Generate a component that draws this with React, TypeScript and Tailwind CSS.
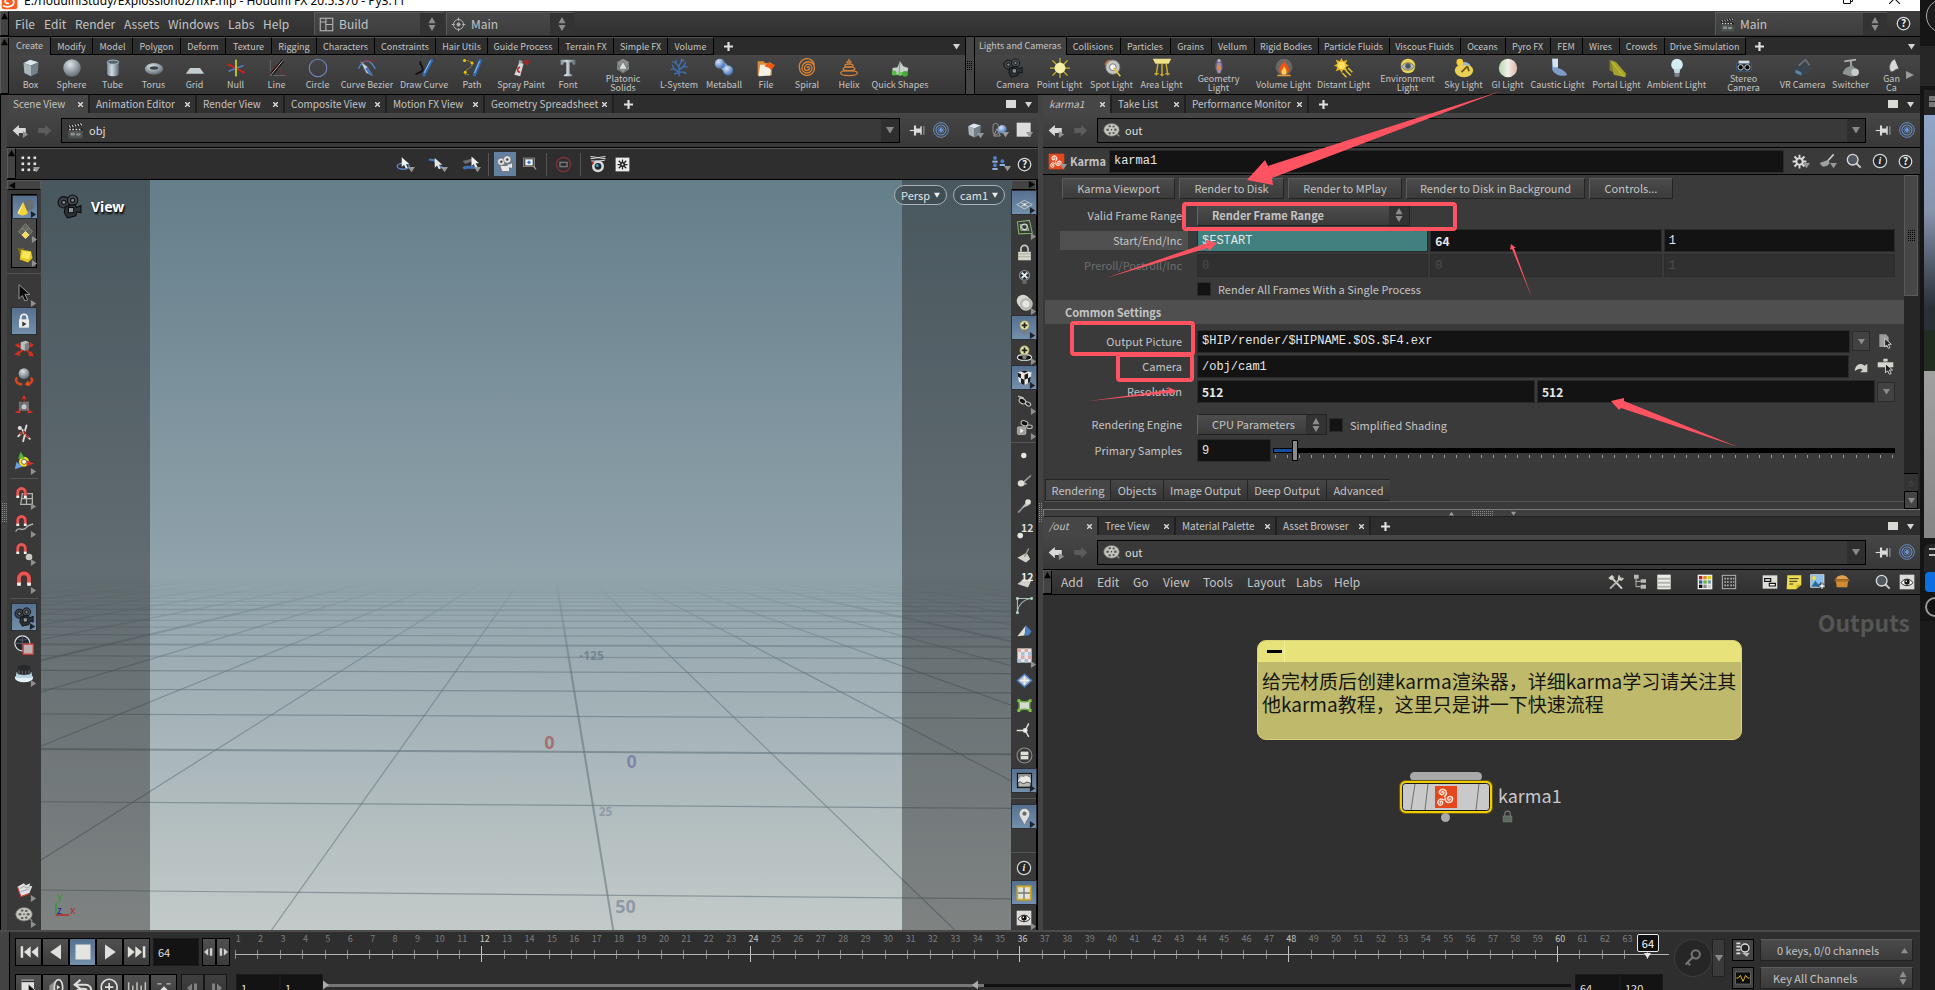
import { ReactNode } from 'react'
import clsx from 'clsx'

const SPIRAL = 'M0 0a1 1 0 0 1 2 0a2 2 0 0 1-4 0a3 3 0 0 1 6 0'

const KARMA = (
  <g>
    <rect x="1" y="1" width="22" height="22" fill="#e5481c" />
    <g fill="none" stroke="#fbe3d8" strokeWidth="1.3" strokeLinecap="round">
      <path d={SPIRAL} transform="translate(8 7) rotate(60) scale(1.25)" />
      <path d={SPIRAL} transform="translate(16 14) rotate(190) scale(1.25)" />
      <path d={SPIRAL} transform="translate(6.500 18) rotate(-50) scale(1.05)" />
    </g>
  </g>
)

const REEL = (
  <g>
    <ellipse cx="12" cy="11" rx="11" ry="9" fill="#c4c5bd" stroke="#6d6e68" />
    <g fill="#5f605a">
      <ellipse cx="6.500" cy="11" rx="2" ry="1.700" />
      <ellipse cx="17.500" cy="11" rx="2" ry="1.700" />
      <ellipse cx="9.500" cy="6" rx="2" ry="1.500" />
      <ellipse cx="15" cy="6.500" rx="1.800" ry="1.400" />
      <ellipse cx="9.500" cy="16" rx="2" ry="1.500" />
      <ellipse cx="15" cy="15.500" rx="1.800" ry="1.400" />
    </g>
    <circle cx="12" cy="11" r="1" fill="#333" />
    <path d="M20 17l3 3" stroke="#8a8b84" strokeWidth="2" />
  </g>
)

const MOVIECAM = (
  <g stroke="#0b0d0f" strokeWidth="1">
    <circle cx="6.500" cy="8" r="5.500" fill="#3c4247" />
    <circle cx="15" cy="6" r="5" fill="#464d53" />
    <circle cx="6.500" cy="8" r="2" fill="#7d868d" />
    <circle cx="15" cy="6" r="2" fill="#7d868d" />
    <path d="M8 12l9-2 2 3 4-2v7l-4-1-1 4-8 2-3-5z" fill="#2d3236" />
    <rect x="11" y="13" width="5" height="5" fill="#8e979e" />
  </g>
)

const CLAPPER = (
  <g>
    <path d="M1 5l20-4 1 4L2 9z" fill="#161616" />
    <path d="M3 5l2 3M7 4.200l2 3M11 3.400l2 3M15 2.600l2 3M19 2l2 3" stroke="#d5d5d5" strokeWidth="1.600" />
    <rect x="2" y="9" width="20" height="14" fill="#4e5451" />
    <path d="M2 10.500h20" stroke="#161616" strokeWidth="3" />
    <path d="M3 10.500h18" stroke="#d5d5d5" strokeWidth="2" strokeDasharray="2.500 2" />
    <path d="M5 15h6v4H5zM13 16h6v3h-6z" fill="#8b938f" />
  </g>
)

const MAGNET = (
  <g fill="none">
    <path d="M6 17v-7a6 6 0 0 1 12 0v7" stroke="#7e1c1c" strokeWidth="6" />
    <path d="M6 15v-5a6 6 0 0 1 12 0v5" stroke="#e05a5a" strokeWidth="4.500" />
    <path d="M6 15v4M18 15v4" stroke="#f4f4f4" strokeWidth="4.500" />
  </g>
)

const CURSOR = <path d="M0 0v13l3-3 2.500 5 2.500-1-2.500-5h4.500z" />

const BULB = (
  <g>
    <circle cx="12" cy="9" r="6.500" fill="#e9e6a8" stroke="#8d8a50" />
    <path d="M9 15h6v5l-3 2-3-2z" fill="#7c7c7c" />
  </g>
)

const art: Record<string, ReactNode> = {
  karma: KARMA,
  reel: REEL,
  moviecam: MOVIECAM,
  clapper: CLAPPER,
  appicon: (
    <g>
      <rect x="1" y="1" width="22" height="22" rx="3" fill="#ff5a1f" />
      <path d="M3 18c6 3 15 1 15-5s-8-8-11-4 1 7 4 5" fill="none" stroke="#fff" strokeWidth="2.500" />
    </g>
  ),
  box: (
    <g>
      <path d="M3 6l8-4 10 3-9 4z" fill="#dfe6ea" />
      <path d="M3 6l9 3v13l-8-4z" fill="#a9b4bb" />
      <path d="M12 9l9-4-1 13-8 4z" fill="#75818a" />
    </g>
  ),
  sphere: <circle cx="12" cy="12" r="10.500" fill="url(#ball)" />,
  tube: (
    <g>
      <path d="M5 5v14c0 4 14 4 14 0V5z" fill="url(#steel)" />
      <ellipse cx="12" cy="5" rx="7" ry="2.500" fill="#56656e" stroke="#b8cbd4" />
    </g>
  ),
  torus: (
    <g>
      <ellipse cx="12" cy="13" rx="11" ry="7" fill="url(#ball)" />
      <ellipse cx="12" cy="12" rx="5" ry="2" fill="#3b444a" />
    </g>
  ),
  grid: <path d="M6 12h12l5 7H1z" fill="#c3ccd1" />,
  null: (
    <g strokeWidth="2">
      <path d="M3 16l18-7" stroke="#4f7fc0" />
      <path d="M4 8l17 9" stroke="#d02020" />
      <path d="M12 2v20" stroke="#b5bf2e" strokeWidth="2.500" />
      <circle cx="4" cy="8" r="1.500" fill="#e01818" />
      <circle cx="21" cy="17" r="1.500" fill="#e01818" />
    </g>
  ),
  line: (
    <g fill="none">
      <path d="M4 2v19h18" stroke="#6e6e6e" />
      <path d="M5 20L19 3" stroke="#111" strokeWidth="4" />
      <path d="M5 20L19 3" stroke="#ddd" strokeWidth="1" />
      <path d="M3 18L16 3M12 9l8 12" stroke="#c02323" strokeDasharray="2 1.500" />
    </g>
  ),
  circle: <circle cx="12" cy="12" r="10.500" fill="none" stroke="#6f86b9" strokeWidth="1.300" />,
  bezier: (
    <g fill="none">
      <path d="M2 13C5 4 10 3 14 4s6 6 8 9" stroke="#4f8fd0" strokeWidth="1.500" />
      <path d="M5 4l17-1" stroke="#a52222" />
      <path d="M4 4l8 6 7 11-8-3-4-8z" fill="#ccd3d8" stroke="#5c666d" />
      <path d="M11 12l6 8" stroke="#3f74c0" strokeWidth="3" />
    </g>
  ),
  draw: (
    <g fill="none">
      <path d="M8 4c-3 4 5 6 2 11-2 3-5 2-8 5" stroke="#111" strokeWidth="2" />
      <path d="M21 3L12 20" stroke="#2f6bb5" strokeWidth="4" strokeLinecap="round" />
      <path d="M20 3L12 18" stroke="#9cc6f0" strokeWidth="1.200" />
    </g>
  ),
  path: (
    <g fill="none">
      <path d="M3 3c10 0 12 5 6 9s-7 6-5 8h5" stroke="#b9b13a" strokeDasharray="2 1" />
      <circle cx="3" cy="3" r="1.800" fill="#f0c800" />
      <circle cx="12" cy="6" r="1.800" fill="#f0c800" />
      <circle cx="4" cy="17" r="1.800" fill="#f0c800" />
      <path d="M22 3L15 20" stroke="#2f6bb5" strokeWidth="4" strokeLinecap="round" />
      <path d="M21 4L15 18" stroke="#9cc6f0" strokeWidth="1.200" />
    </g>
  ),
  spray: (
    <g>
      <path d="M10 5l5 2-4 15-7-2z" fill="#d5dade" />
      <path d="M10 2l4 2-1 3-4-1z" fill="#9aa2a8" />
      <path d="M14 3l8 0-2 7z" fill="#c01c1c" opacity=".85" />
      <path d="M11 11a3 3 0 1 0 0 6" fill="none" stroke="#d02020" strokeWidth="1.800" />
    </g>
  ),
  font: <path d="M3 2h18v6h-3l-1-3h-3v14l3 1v2H7v-2l3-1V5H7L6 8H3z" fill="url(#steel)" />,
  platonic: (
    <g>
      <path d="M12 1l9 5v11l-9 6-9-6V6z" fill="#8b8f8f" />
      <path d="M12 5l6 11H6z" fill="#dadddd" />
      <path d="M12 1l-9 5 3 10 6-11 6 11 3-10M6 16l6 7 6-7" fill="none" stroke="#5a5d5d" />
    </g>
  ),
  lsystem: (
    <path
      d="M12 22V9M12 17l-6-4-4 1M6 13L4 8M12 14l6-4 4 1M18 10l2-5M12 11L8 6 4 4M8 6l1-4M12 9l3-5 0-3M15 4l3-2M13 17l5 0 3 2M11 18l-5 1"
      fill="none"
      stroke="#3d74b8"
      strokeWidth="1.600"
    />
  ),
  metaball: (
    <g>
      <path d="M6 10l7 8 6-6-6-7z" fill="#7ea6dd" />
      <circle cx="7" cy="7" r="6" fill="url(#blue)" />
      <circle cx="17" cy="15" r="6" fill="url(#blue)" />
    </g>
  ),
  file: (
    <g>
      <path d="M2 4h7l2 2h8v15H2z" fill="#d98a3a" />
      <path d="M5 8h14l-2 13-14 1z" fill="#f2eee8" />
      <path d="M10 10l7-6v3l6 1-5 7-2-3z" fill="#ee5a12" />
    </g>
  ),
  spiral: (
    <path
      d="M12 12a1.500 1.500 0 0 1 3 0a3 3 0 0 1-6 0a4.500 4.500 0 0 1 9 0a6 6 0 0 1-12 0a7.500 7.500 0 0 1 15 0a9 9 0 0 1-18 0a9 9 0 0 1 18-4"
      fill="none"
      stroke="#d98436"
      strokeWidth="1.600"
    />
  ),
  helix: (
    <g fill="none" stroke="#d98436" strokeWidth="1.500">
      <ellipse cx="12" cy="18" rx="10" ry="3" />
      <ellipse cx="12" cy="13" rx="7" ry="2.400" />
      <ellipse cx="12" cy="9" rx="5" ry="1.800" />
      <ellipse cx="12" cy="5" rx="2.500" ry="1.200" />
      <path d="M12 1v3" />
    </g>
  ),
  quick: (
    <g>
      <path d="M3 12l6-1 3-7 4 6 6 2-2 8H3z" fill="#c9cfcc" />
      <path d="M12 4l-1 13 9 3" fill="none" stroke="#7f8683" />
      <circle cx="5" cy="18" r="3" fill="#57b947" />
      <circle cx="18" cy="19" r="3.500" fill="#48a83a" />
      <circle cx="12" cy="19" r="2.500" fill="#6cc95c" />
    </g>
  ),
  point: (
    <g>
      <path d="M12 0v24M0 12h24M3 3l18 18M21 3L3 21" stroke="#c9b52c" strokeWidth="1.500" />
      <circle cx="12" cy="12" r="6.500" fill="#f5efa6" />
    </g>
  ),
  spot: (
    <g>
      <path d="M3 8a8 8 0 0 1 8-6l-3 9z" fill="#d0702a" />
      <circle cx="13" cy="11" r="8.500" fill="#c4c6c4" stroke="#777" />
      <circle cx="13" cy="11" r="4" fill="#f4f4f0" stroke="#666" />
      <path d="M14 12l8 10" stroke="#e0c63c" strokeWidth="2" />
    </g>
  ),
  area: (
    <g>
      <path d="M1 1h22l-3 6H4z" fill="#f0e08a" />
      <path d="M7 7l-2 14M12 7v15M17 7l2 14" stroke="#c8a92a" strokeWidth="1.800" />
      <path d="M3 19h5M10 20h4M16 19h5" stroke="#c8a92a" strokeWidth="1.800" />
    </g>
  ),
  geo: (
    <g>
      <ellipse cx="12" cy="12" rx="6" ry="10" fill="#6d5a80" opacity=".8" />
      <circle cx="12" cy="4" r="2.500" fill="#b9b3c6" />
      <path d="M9 7h6l1 8-2 8h-4l-2-8z" fill="#9b8fb0" />
      <path d="M12 9l3 8H9z" fill="#f08a1c" />
    </g>
  ),
  volume: (
    <g>
      <circle cx="12" cy="11" r="10" fill="#77777a" opacity=".7" />
      <path d="M12 2c1 5 6 6 6 12a6 6 0 0 1-12 0c0-4 3-4 3-8 2 1 3 2 3-4z" fill="#ea5414" />
      <path d="M12 10c2 3 3 4 3 7a3 3 0 0 1-6 0c0-3 2-3 3-7z" fill="#ffd35a" />
      <path d="M4 21h16" stroke="#e09a38" strokeWidth="2" />
    </g>
  ),
  distant: (
    <g>
      <path d="M9 0l2 4 5-2-2 5 4 2-4 2 2 5-5-2-2 4-2-4-5 2 2-5-4-2 4-2-2-5 5 2z" fill="#e8b41c" />
      <circle cx="9" cy="9" r="4.500" fill="#fbdf5d" />
      <path d="M17 12l5 5M14 15l6 6M10 18l5 5" stroke="#e3c62c" strokeWidth="1.800" />
    </g>
  ),
  env: (
    <g>
      <circle cx="12" cy="12" r="11" fill="#e8d25a" />
      <path d="M2 13c5-8 15-8 20 0-5 7-15 7-20 0z" fill="#aeb6ba" stroke="#6c6030" />
      <circle cx="12" cy="12" r="4" fill="#4a5560" />
    </g>
  ),
  sky: (
    <g>
      <ellipse cx="12" cy="15" rx="11" ry="8" fill="#e9cf55" />
      <path d="M5 8c5-5 12-4 15 1z" fill="#9fb7d0" />
      <circle cx="7" cy="5" r="4" fill="#f3cf3a" />
      <path d="M9 17l7-7M16 10l2 6" stroke="#6d5312" strokeWidth="2" />
    </g>
  ),
  gi: <circle cx="12" cy="12" r="11" fill="url(#gi)" />,
  caustic: (
    <g>
      <path d="M5 1h7v11c4 1 9 4 11 8-4 3-12 1-16-3l-2-3z" fill="#7d9cc9" />
      <path d="M5 1h7v10H6z" fill="#d4e1f2" />
    </g>
  ),
  portal: (
    <g>
      <path d="M3 2l7 2 0 14-7-3z" fill="#7f7c35" />
      <path d="M5 4l6 1 12 14-1 4-14-3z" fill="#a5a32a" />
      <path d="M5 4l15 18" stroke="#d1cc4c" />
    </g>
  ),
  ambient: (
    <g>
      <circle cx="12" cy="8" r="7" fill="#d5ecf2" />
      <path d="M8 13h8l-1 5H9z" fill="#c0d9df" />
      <path d="M9 18h6v4l-3 1-3-1z" fill="#7c8488" />
    </g>
  ),
  stereo: (
    <g>
      <rect x="1" y="8" width="22" height="12" rx="1" fill="#2e3338" stroke="#3c6fb0" />
      <path d="M4 4h16v4H4z" fill="#d9dcdd" />
      <circle cx="7" cy="14" r="4" fill="#0c0c0c" stroke="#c9ced1" strokeWidth="1.500" />
      <circle cx="17" cy="14" r="4" fill="#0c0c0c" stroke="#c9ced1" strokeWidth="1.500" />
    </g>
  ),
  vr: (
    <g>
      <path d="M1 12l14-5 8 5-1 6-12 4-9-4z" fill="#39444c" />
      <path d="M3 14l7 3v4l-7-3z" fill="#5a88a8" />
      <path d="M7 9l8-7 5 7" fill="none" stroke="#66737c" strokeWidth="2" />
    </g>
  ),
  switcher: (
    <g>
      <path d="M4 4l14-2M12 4v6" stroke="#aeb3b0" strokeWidth="2" />
      <path d="M2 19c1-6 6-9 12-10l6 7c-1 5-6 7-9 6" fill="#8d9592" />
      <circle cx="17" cy="17" r="4.500" fill="#c7cdca" />
    </g>
  ),
  gamepad: <path d="M16 2c-6 2-10 12-6 18 4 2 6-4 12-4" fill="#d9d9d9" stroke="#6b6b6b" />,
  dots9: (
    <g fill="#e0e0e0">
      {[2, 10, 18].map(y => [2, 10, 18].map(x => <rect key={`${x}${y}`} x={x} y={y} width="3.500" height="3.500" />))}
    </g>
  ),
  selobj: (
    <g fill="none">
      <ellipse cx="11" cy="15" rx="8" ry="4" stroke="#5b87c4" strokeWidth="2" />
      <g transform="translate(9 3)" fill="#f2f2f2">{CURSOR}</g>
    </g>
  ),
  selcurve: (
    <g fill="none">
      <path d="M1 6l7 1 7 8 7 3" stroke="#4c7ab8" strokeWidth="3" />
      <g transform="translate(9 4)" fill="#e6e6e6">{CURSOR}</g>
    </g>
  ),
  seledge: (
    <g fill="none">
      <path d="M2 8l12-3 4 2-12 5z" fill="#6a6f72" />
      <path d="M3 18c6-4 12 1 17-3" stroke="#3f6fb4" strokeWidth="4" />
      <g transform="translate(14 2)" fill="#f2f2f2">{CURSOR}</g>
    </g>
  ),
  camwhite: (
    <g fill="#e6e6e6" stroke="#555" strokeWidth=".8">
      <circle cx="7" cy="9" r="5" />
      <circle cx="15" cy="6" r="5" />
      <path d="M5 14h10v-2h3l4-2v8l-4-1v5H8z" />
      <circle cx="7" cy="9" r="1.500" fill="#444" />
      <circle cx="15" cy="6" r="1.500" fill="#444" />
    </g>
  ),
  zoombox: (
    <g>
      <rect x="2" y="3" width="17" height="13" fill="#4d4d4d" stroke="#999" />
      <rect x="5" y="5" width="11" height="9" fill="#e8f0fa" />
      <path d="M10.500 7v5M8 9.500h5" stroke="#2b62b8" strokeWidth="2" />
      <path d="M17 15l4 5" stroke="#999" strokeWidth="2" />
    </g>
  ),
  nocam: (
    <g fill="none">
      <circle cx="12" cy="12" r="10" stroke="#7c3434" strokeWidth="2" />
      <rect x="7" y="9" width="10" height="6" stroke="#777" strokeWidth="2" />
    </g>
  ),
  flycam: (
    <g>
      <path d="M2 2l20 3M22 2L2 5M3 8l8 0M13 8l8-1" stroke="#ddd" strokeWidth="1.600" />
      <circle cx="12" cy="15" r="8" fill="#d9d9d9" />
      <circle cx="12" cy="15" r="4.500" fill="#202a33" />
      <circle cx="11" cy="14" r="2" fill="#3aa0c0" />
      <circle cx="5" cy="11" r="1.500" fill="#d02020" />
    </g>
  ),
  gearbox: (
    <g>
      <rect x="1" y="1" width="22" height="22" fill="#ececec" />
      <path d="M12 4v16M4 12h16M6 6l12 12M18 6L6 18" stroke="#222" strokeWidth="2" />
      <circle cx="12" cy="12" r="4" fill="#222" />
      <circle cx="12" cy="12" r="1.600" fill="#ececec" />
    </g>
  ),
  people: (
    <g fill="#8fafdf">
      {[[4, 3], [4, 14], [15, 8]].map(([x, y]) => (
        <g key={`${x}${y}`}>
          <circle cx={x + 2} cy={y} r="3" fill="#4f7cc4" />
          <path d={`M${x - 2} ${y + 7}v-3h8v3z`} />
        </g>
      ))}
    </g>
  ),
  help: (
    <g>
      <circle cx="12" cy="12" r="10" fill="#26292b" stroke="#dcdcdc" strokeWidth="2" />
      <text x="12" y="17.500" textAnchor="middle" fontSize="16" fontWeight="bold" fill="#eee">?</text>
    </g>
  ),
  info: (
    <g>
      <circle cx="12" cy="12" r="10" fill="#26292b" stroke="#cfd6d8" strokeWidth="1.800" />
      <text x="12" y="17" textAnchor="middle" fontSize="15" fontStyle="italic" fontWeight="bold" fontFamily="Liberation Serif" fill="#eee">i</text>
    </g>
  ),
  pin: (
    <g fill="#dcdcdc">
      <path d="M1 12h9" stroke="#dcdcdc" strokeWidth="1.600" />
      <path d="M7 5h3v4h6V6h2v12h-2v-3h-6v4H7z" />
      <path d="M21 6v12" stroke="#999" strokeWidth="1.500" />
    </g>
  ),
  target: (
    <g fill="none" stroke="#6d93c8">
      <circle cx="12" cy="12" r="11" strokeWidth="1.400" />
      <circle cx="12" cy="12" r="7.500" strokeWidth="1.600" />
      <circle cx="12" cy="12" r="4.500" strokeWidth="1" />
      <circle cx="12" cy="12" r="2.500" fill="#5e9cf0" />
    </g>
  ),
  shapes: (
    <g>
      <rect x="3" y="2" width="8" height="17" rx="4" fill="none" stroke="#8a8a8a" strokeWidth="1.500" />
      <path d="M9 10l5 11H4z" fill="none" stroke="#9a9a9a" strokeWidth="1.500" />
      <circle cx="17" cy="11" r="6.500" fill="url(#blue)" />
    </g>
  ),
  whitesq: <rect x="1" y="1" width="21" height="21" fill="#dcdcda" />,
  back: <path d="M1 12l10-9v5h11v8H11v5z" fill="#d8dad8" />,
  fwd: <path d="M23 12l-10-9v5H2v8h11v5z" fill="#5c5c5c" />,
  gear: (
    <g>
      <path d="M12 1v22M1 12h22M4 4l16 16M20 4L4 20" stroke="#dcdcdc" strokeWidth="3" />
      <circle cx="12" cy="12" r="6.500" fill="#dcdcdc" />
      <circle cx="12" cy="12" r="3.500" fill="#3a3a3a" />
    </g>
  ),
  brush: (
    <g>
      <path d="M22 2l-9 10" stroke="#c9ccc8" strokeWidth="2.500" />
      <path d="M1 15l13-5 2 5c-3 5-9 7-12 4z" fill="#9da39e" />
    </g>
  ),
  search: (
    <g fill="none">
      <path d="M15 15l7 7" stroke="#c9c9c9" strokeWidth="3" />
      <circle cx="10" cy="10" r="8" fill="#4f5a60" stroke="#dcdcdc" strokeWidth="2" />
    </g>
  ),
  cone: (
    <g>
      <circle cx="16" cy="9" r="7" fill="#6a6f73" />
      <path d="M9 5l6 14c-3 4-10 4-13 0z" fill="#f2d53a" />
      <path d="M9 5L4 20c-1 0-2-1-2-1z" fill="#fbf0a0" />
    </g>
  ),
  diamonds: (
    <g>
      <path d="M12 1l5 5-5 5-5-5z" fill="#62665c" stroke="#8b8f83" />
      <path d="M7 7l5 5-5 5-5-5zM17 7l5 5-5 5-5-5z" fill="#62665c" stroke="#8b8f83" />
      <path d="M12 12l5 5-5 5-5-5z" fill="#f7dc58" stroke="#fff3b0" />
    </g>
  ),
  ycube: (
    <g>
      <path d="M2 3h9l-5 11z" fill="#8a7a14" opacity=".8" />
      <path d="M7 5l13 2 2 9-6 6-11-4z" fill="#e7c81c" />
      <path d="M9 7l11 1-3 10-10-3z" fill="#fae95c" />
    </g>
  ),
  arrow: <g transform="translate(6 2) scale(1.300)" fill="#0a0a0a" stroke="#999" strokeWidth=".9">{CURSOR}</g>,
  lock: (
    <g>
      <path d="M8 11V8a4 4 0 0 1 8 0v3" fill="none" stroke="#ececec" strokeWidth="2.200" />
      <rect x="6" y="10" width="12" height="10" fill="#ececec" />
      <path d="M10 12.500l5 3-5 3z" fill="#333" />
    </g>
  ),
  padlock: (
    <g>
      <path d="M7 11V7a5 5 0 0 1 10 0v4" fill="none" stroke="#c8c8c0" strokeWidth="2.400" />
      <rect x="3" y="11" width="18" height="12" fill="#d6d6cc" />
      <path d="M3 14h18M3 18h18" stroke="#9a9a90" />
    </g>
  ),
  move: (
    <g>
      <path d="M12 12L4 18M14 12l7 7M13 10l9-2M12 10L4 8" stroke="#d2301c" strokeWidth="2.500" />
      <path d="M0 19l6-5 2 6zM24 21l-7-1 4-6zM24 7l-5-3v6zM1 7l5-2v6z" fill="#d2301c" />
      <path d="M8 4l6-2 4 2v8l-5 2-5-2z" fill="#b9bdbf" />
      <path d="M13 6l5-2v8l-5 2z" fill="#7b8184" />
    </g>
  ),
  rotate: (
    <g fill="none">
      <path d="M4 13c-4 3 0 8 6 8M20 13c4 3 0 8-5 8" stroke="#d8451c" strokeWidth="3" />
      <path d="M17 16l-4 5 6 2z" fill="#e8541c" />
      <circle cx="12" cy="8" r="6.500" fill="url(#ball)" />
    </g>
  ),
  scale: (
    <g>
      <path d="M12 0l3 5H9zM1 21l6-4 1 5zM23 21l-6-4-1 5z" fill="#e03020" />
      <path d="M12 4v8L5 19M12 12l7 7" stroke="#a02818" strokeWidth="2" />
      <rect x="6" y="8" width="12" height="11" fill="#8a9297" opacity=".65" />
      <circle cx="12" cy="14" r="3" fill="#c4cbd0" />
    </g>
  ),
  pose: (
    <g fill="none" strokeWidth="2.200" strokeLinecap="round">
      <circle cx="7" cy="6" r="2.500" fill="#ddd" />
      <path d="M10 8l3 6-2 8M13 14l6 5M15 3l-2 7M9 12l-4 4" stroke="#dcdcdc" />
      <path d="M12 10l1 3M15 15l2 2M8 13l1-1" stroke="#b02a20" />
    </g>
  ),
  handle: (
    <g>
      <circle cx="12" cy="13" r="6" fill="#f2df2c" />
      <path d="M8 1l5 8H5z" fill="#4fb63a" />
      <path d="M24 15l-9-4v7z" fill="#d83030" />
      <path d="M1 22l2-9 7 6z" fill="#6aa0e0" />
      <circle cx="12" cy="13" r="3" fill="#fafad0" stroke="#555" />
    </g>
  ),
  magnet: MAGNET,
  magnetgrid: (
    <g>
      <path d="M10 9h12v13H8zM15 9v13M9 15h13" fill="none" stroke="#b0b6b0" strokeWidth="1.500" />
      <g transform="scale(.75)">{MAGNET}</g>
    </g>
  ),
  magnetcurve: (
    <g>
      <path d="M2 21c4-8 8 2 13-5 2-3 5-3 8-4" fill="none" stroke="#b0b6b0" strokeWidth="1.600" />
      <g transform="scale(.75)">{MAGNET}</g>
    </g>
  ),
  magnetpoint: (
    <g>
      <circle cx="18" cy="18" r="4" fill="#c9c9c0" />
      <g transform="scale(.75)">{MAGNET}</g>
    </g>
  ),
  globe: (
    <g fill="none">
      <circle cx="10" cy="10" r="9" fill="#20282a" stroke="#e0e0e0" strokeWidth="1.500" />
      <path d="M1 10h18M10 1v18M4 4c3 3 9 3 12 0" stroke="#667" />
      <rect x="11" y="11" width="12" height="12" fill="#b9b2ae" stroke="#e03a3a" strokeWidth="1.500" />
    </g>
  ),
  domelight: (
    <g>
      <ellipse cx="12" cy="18" rx="11" ry="5" fill="#e4f2f8" />
      <path d="M3 11l-1 7h20l-1-7z" fill="#b9d6e4" />
      <path d="M4 6c0-5 16-5 16 0v6c0 3-16 3-16 0z" fill="#26292b" />
      <path d="M6 8v6M10 9v6M14 9v6M18 8v6" stroke="#6b6f72" />
    </g>
  ),
  papers: (
    <g>
      <path d="M2 8l9-5 3 3 6-3-1 4 4 0-4 10-12 5z" fill="#dfe2e4" />
      <path d="M2 8l5 14 12-4" fill="none" stroke="#c8412e" strokeWidth="1.500" />
      <path d="M5 11l7-4 2 3 6-2M7 15l12-4" fill="none" stroke="#8b8f92" />
    </g>
  ),
  plane: (
    <g fill="none" stroke="#d8d8d0" strokeWidth="1.100">
      <path d="M1 15l11-6 11 6-11 6zM6.500 12l11 6M6.500 18l11-6" />
      <circle cx="12" cy="15" r="1.500" fill="#eee" />
    </g>
  ),
  greenplane: (
    <g fill="none" strokeWidth="1.500">
      <path d="M2 4l17-2 4 18-19 1z" stroke="#7fb26a" />
      <path d="M6 8h9l3 8H7z" stroke="#a8c49a" />
      <circle cx="12" cy="11" r="4" stroke="#ddd" />
    </g>
  ),
  bulbx: (
    <g fill="none">
      <circle cx="12" cy="9" r="7" fill="#2a3236" stroke="#8d9a9e" strokeWidth="1.500" />
      <path d="M8 5l8 8M16 5l-8 8" stroke="#eee" strokeWidth="2.500" />
      <path d="M9 16h6v5h-6z" fill="#666" />
    </g>
  ),
  clay: (
    <g>
      <circle cx="10" cy="10" r="9" fill="#d4d6d0" />
      <circle cx="14" cy="14" r="9" fill="#b4b7b1" stroke="#e3e4df" />
      <circle cx="14" cy="14" r="5" fill="#e6e7e2" />
    </g>
  ),
  bulbplus: (
    <g>
      {BULB}
      <path d="M12 5v8M8 9h8" stroke="#222" strokeWidth="2.500" />
    </g>
  ),
  bulbring: (
    <g>
      <ellipse cx="12" cy="19" rx="10" ry="4" fill="#111" stroke="#eee" strokeWidth="1.500" />
      {BULB}
      <path d="M12 5v8M8 9h8" stroke="#222" strokeWidth="2.500" />
    </g>
  ),
  checkcube: (
    <g>
      <path d="M2 5l10-3 10 3-2 13-8 5-8-5z" fill="#e6e6e6" />
      <path d="M7 3.500L12 2l5 1.500-5 2zM2 5l5 2v6l-4-2zM12 8l5-2 0 7-5 2zM7 13l5 2v8l-5-3zM17 13l4-2-1 7-3 2z" fill="#1a1a1a" />
    </g>
  ),
  glasses: (
    <g fill="none" stroke="#c4c6c0">
      <path d="M3 3l8 3" strokeWidth="2" />
      <ellipse cx="9" cy="10" rx="5" ry="3.500" fill="#111" transform="rotate(30 9 10)" strokeWidth="1.500" />
      <ellipse cx="17" cy="14" rx="4" ry="2.500" fill="#222" transform="rotate(30 17 14)" strokeWidth="1.500" />
    </g>
  ),
  glasses2: (
    <g fill="none" stroke="#c4c6c0">
      <ellipse cx="12" cy="6" rx="5" ry="3.500" fill="#111" transform="rotate(20 12 6)" strokeWidth="1.500" />
      <ellipse cx="19" cy="11" rx="4" ry="2.500" fill="#222" strokeWidth="1.500" />
      <rect x="2" y="11" width="12" height="11" rx="2" fill="#9c9f98" />
      <path d="M6 13v7l5-3.500z" fill="#f0f0f0" stroke="none" />
    </g>
  ),
  dot: <circle cx="11" cy="12" r="3.800" fill="#e6e6e0" />,
  normal: (
    <g>
      <path d="M10 15l11-10" stroke="#9da29c" strokeWidth="2.200" />
      <path d="M8 11l8 6-8 3z" fill="#9fa49d" />
      <circle cx="7" cy="16" r="4.500" fill="#dcdcd4" />
    </g>
  ),
  needle: (
    <g>
      <path d="M3 22L15 9" stroke="#8d928c" strokeWidth="2.500" />
      <path d="M8 16l6-8 4 4z" fill="#b9bdb8" />
      <circle cx="17" cy="7" r="4" fill="#e0e0d8" />
    </g>
  ),
  ptnum: (
    <g>
      <circle cx="6" cy="19" r="4" fill="#e6e6e0" />
      <text x="7" y="14" fontSize="15" fontWeight="bold" fill="#dcdcdc">12</text>
    </g>
  ),
  primnormal: (
    <g>
      <path d="M2 15l13-7 5 9-6 5z" fill="#d2d2ca" />
      <path d="M12 14L18 2" stroke="#8f948e" strokeWidth="2" />
    </g>
  ),
  primnum: (
    <g>
      <path d="M2 17l8-6h12l-5 11z" fill="#d2d2ca" />
      <text x="7" y="12" fontSize="15" fontWeight="bold" fill="#eee">12</text>
    </g>
  ),
  hull: (
    <g fill="none" stroke="#a6c0b0" strokeWidth="1.500">
      <path d="M2 22V2h20M2 20C4 10 10 4 20 2" />
      <circle cx="2" cy="2" r="1.500" fill="#eee" />
      <circle cx="22" cy="2" r="1.500" fill="#eee" />
      <circle cx="2" cy="22" r="1.500" fill="#eee" />
    </g>
  ),
  backface: (
    <g>
      <path d="M2 20L14 5l-2 14z" fill="#e0e0d8" />
      <path d="M14 5l8 8-4 6-6 0z" fill="#4d7fc4" />
    </g>
  ),
  checker: (
    <g>
      <rect x="2" y="2" width="20" height="20" fill="#e6e4e2" />
      <path d="M2 2h5v5H2zM12 2h5v5h-5zM7 12h5v5H7zM17 12h5v5h-5z" fill="#dda9a4" />
      <path d="M7 7h5v5H7zM17 7h5v5h-5zM2 17h5v5H2zM12 17h5v5h-5z" fill="#a9bfdd" />
    </g>
  ),
  bluediamond: (
    <g>
      <path d="M12 3l10 9-10 9-10-9z" fill="#c5cac8" stroke="#4a7cc8" strokeWidth="2" />
      <path d="M12 6v12M6 12h12" stroke="#f0f0f0" strokeWidth="2" />
    </g>
  ),
  greenhull: (
    <g>
      <path d="M4 5c5 2 11 2 16 0-1 5-1 9 0 14-5-2-11-2-16 0 1-5 1-9 0-14z" fill="#d4dccf" stroke="#6fa84a" strokeWidth="2" />
      <path d="M2 3h4v4H2zM18 3h4v4h-4zM2 17h4v4H2zM18 17h4v4h-4z" fill="#7ccc44" />
    </g>
  ),
  tripod: (
    <g stroke="#e0e0dc" strokeWidth="2">
      <path d="M13 12L18 2M13 12l5 9M13 12H1" />
      <circle cx="13" cy="12" r="2.500" fill="#fff" />
    </g>
  ),
  listcircle: (
    <g fill="none">
      <circle cx="12" cy="12" r="10.500" stroke="#8d8d8d" strokeWidth="1.500" />
      <rect x="6.500" y="6.500" width="11" height="11" fill="#e0e0dc" />
      <path d="M6 12h12" stroke="#666" strokeWidth="1.500" />
    </g>
  ),
  bgimage: (
    <g>
      <rect x="2" y="2" width="20" height="20" fill="#8c8f8a" stroke="#111" strokeWidth="1.500" />
      <path d="M3 12l4-6 4 1 3-2 6 3 1 7c-3 2-4-2-7-1s-4 4-7 0c-2-2-4 1-4 1z" fill="#e8e9e5" />
      <path d="M3 15c4-3 6 3 9 1s5-2 9 0v5H3z" fill="#b7b9b3" stroke="#333" />
    </g>
  ),
  marker: (
    <g>
      <path d="M12 23C9 16 5 13 5 8a7 7 0 0 1 14 0c0 5-4 8-7 15z" fill="#dedfda" />
      <circle cx="12" cy="8" r="3" fill="#6b6d6a" />
    </g>
  ),
  quadview: (
    <g>
      <rect x="2" y="2" width="20" height="20" fill="#e2e2de" stroke="#d6aa14" strokeWidth="2.500" />
      <path d="M12 3v18M3 12h18" stroke="#777" strokeWidth="2" />
    </g>
  ),
  eye: (
    <g>
      <rect x="1" y="1" width="22" height="22" fill="#dcdcd8" />
      <path d="M3 13c5-7 13-7 18 0-5 6-13 6-18 0z" fill="#fff" stroke="#222" strokeWidth="1.500" />
      <circle cx="12" cy="12" r="4" fill="#111" />
      <circle cx="11" cy="11" r="1.200" fill="#fff" />
    </g>
  ),
  chooser: (
    <g>
      <path d="M2 2h10l4 4v15H2z" fill="#9b9b9b" />
      <g transform="translate(10 8)" fill="#222" stroke="#e8e8e8" strokeWidth="1.200">{CURSOR}</g>
    </g>
  ),
  nodechooser: (
    <g>
      <path d="M9 1h6v4H9zM1 6h22v7H1z" fill="#d5d5d0" />
      <g transform="translate(12 8)" fill="#222" stroke="#e8e8e8" strokeWidth="1.200">{CURSOR}</g>
    </g>
  ),
  jump: <path d="M1 18c1-10 9-13 15-8l4-3v13H9l4-4c-4-3-7-1-12 2z" fill="#cfcfc9" />,
  wrench: (
    <g fill="none" stroke="#d6d6d0" strokeWidth="3">
      <path d="M5 5l16 17" />
      <path d="M20 5L3 22" stroke="#b4b4ae" />
      <path d="M1 6l5-4 3 3-4 4z" fill="#d6d6d0" strokeWidth="1" />
      <path d="M17 2l-1 5 4 2 3-3" strokeWidth="2.500" />
    </g>
  ),
  tree: (
    <g fill="#b9bab4">
      <path d="M3 1h7v6H3zM13 8h8v5h-8zM13 16h8v6h-8z" />
      <path d="M6 7v12h7M6 11h7" fill="none" stroke="#b9bab4" strokeWidth="1.500" />
    </g>
  ),
  rows: (
    <g>
      <rect x="2" y="1" width="20" height="22" fill="#ececE8" />
      <path d="M2 7h20M2 13h20M2 19h20" stroke="#b4b4ae" strokeWidth="3" />
    </g>
  ),
  palette: (
    <g>
      <rect x="1" y="1" width="22" height="22" fill="#f0f0ee" />
      {['#c02020', '#e08a1c', '#e0cc1c', '#2f5aa8', '#6cb82c', '#7c9ab8', '#111', '#888', '#ccc'].map((c, i) => (
        <rect key={c} x={3 + (i % 3) * 6.5} y={3 + Math.floor(i / 3) * 6.5} width="5" height="5" fill={c} />
      ))}
    </g>
  ),
  listbox: (
    <g fill="none" stroke="#b4b4b0" strokeWidth="1.500">
      <rect x="2" y="2" width="20" height="20" />
      <path d="M5 7h2.500M9 7h2.500M14 7h2.500M18 7h2M5 12h2.500M9 12h2.500M14 12h2.500M18 12h2M5 17h2.500M9 17h2.500M14 17h2.500M18 17h2" strokeWidth="2.500" />
    </g>
  ),
  netbox: (
    <g>
      <rect x="1" y="2" width="22" height="20" fill="#dcded8" />
      <path d="M4 7h9v4H4zM11 14h9v4h-9z" fill="#fff" stroke="#111" strokeWidth="1.800" />
    </g>
  ),
  note: (
    <g>
      <path d="M2 2h21v14l-8 7H1z" fill="#f0dc50" />
      <path d="M5 7h14M5 11h12M5 15h6" stroke="#333" strokeWidth="1.500" />
      <path d="M15 23l1-7h7z" fill="#c9b224" />
    </g>
  ),
  imageplus: (
    <g>
      <rect x="1" y="1" width="20" height="19" fill="#8fc0ea" stroke="#dfe9f2" />
      <path d="M2 19l6-9 5 6 3-4 5 7z" fill="#2c6a9a" />
      <circle cx="6" cy="6" r="3" fill="#f2dc3a" />
      <path d="M18 13v10M13 18h10" stroke="#222" strokeWidth="4" />
      <path d="M18 14v8M14 18h8" stroke="#fff" strokeWidth="2" />
    </g>
  ),
  basket: (
    <g>
      <path d="M5 4c4-3 10-3 14 0l3 4H2z" fill="#e0a050" />
      <path d="M1 8h22v3H1z" fill="#b06c1c" />
      <path d="M3 11h18l-1 9H4z" fill="#d48a30" />
    </g>
  ),
  layout: (
    <g fill="none" stroke="#b4b4b4" strokeWidth="1.800">
      <rect x="2" y="2" width="20" height="20" />
      <path d="M11 2v20M11 12h11M2 8h9" />
    </g>
  ),
  radial: (
    <g fill="none" stroke="#b4b4b4" strokeWidth="1.600">
      <circle cx="12" cy="12" r="8" />
      <circle cx="12" cy="12" r="2.500" fill="#b4b4b4" />
      <path d="M12 1v5M12 18v5M1 12h5M18 12h5" />
    </g>
  ),
  first: <path d="M2 5h3v14H2zM14 5v14l-8-7zM23 5v14l-8-7z" fill="#e0e0dc" />,
  playback: <path d="M18 3v18L5 12z" fill="#e0e0dc" />,
  stop: <rect x="3" y="3" width="18" height="18" fill="#e4e4e0" />,
  play: <path d="M6 3v18l13-9z" fill="#e0e0dc" />,
  last: <path d="M19 5h3v14h-3zM10 5v14l8-7zM1 5v14l8-7z" fill="#e0e0dc" />,
  stepback: <path d="M10 3v18L0 12zM14 3h6v18h-6z" fill="#d0d0cc" />,
  stepfwd: <path d="M14 3v18l10-9zM4 3h6v18H4z" fill="#d0d0cc" />,
  winsel: (
    <g>
      <rect x="3" y="2" width="15" height="19" fill="#e0e0dc" />
      <path d="M3 4h15" stroke="#333" strokeWidth="2" />
      <g transform="translate(11 7)" fill="#111" stroke="#eee">{CURSOR}</g>
    </g>
  ),
  speaker: (
    <g>
      <path d="M4 9l9-7c5 3 5 15 0 19l-9-7z" fill="#8f8f8b" />
      <ellipse cx="15" cy="11" rx="5" ry="9" fill="#3a3a3a" stroke="#dcdcd8" strokeWidth="2" />
      <path d="M13 8l4 3-4 3z" fill="#ddd" />
    </g>
  ),
  loop: (
    <g fill="none" stroke="#e0e0dc" strokeWidth="2.500">
      <path d="M3 8h12c9 0 9 13 0 13M5 21c-4-6 4-10 12-7" />
      <path d="M9 2L2 8l7 5" />
    </g>
  ),
  clock: (
    <g fill="none" stroke="#e0e0dc" strokeWidth="2">
      <circle cx="11" cy="11" r="9.500" />
      <path d="M11 6v10M6 11h10" />
      <path d="M19 17l3 5" />
    </g>
  ),
  bars: <path d="M2 5v14M7 9v8M12 5v14M17 9v8M22 5v14" stroke="#c0c0bc" strokeWidth="1.800" />,
  keyset: (
    <g>
      <path d="M1 15h22M4 7h5M15 7h5" stroke="#c0c0bc" strokeWidth="1.500" />
      <path d="M12 10l5 5-5 5-5-5z" fill="#e0e0dc" />
    </g>
  ),
  key: (
    <g fill="none" stroke="#757575" strokeWidth="2.200">
      <circle cx="15" cy="8" r="4.500" />
      <path d="M12 11L4 19M6 17l3 3" />
    </g>
  ),
  keyscope: (
    <g fill="none">
      <path d="M2 2h6M2 7h6M2 12h6M2 17h6" stroke="#e0e0dc" strokeWidth="2.500" />
      <circle cx="15" cy="9" r="6" fill="#222" stroke="#dcdcd8" strokeWidth="2" />
      <path d="M10 16h12l-4 6z" fill="#b6b6b2" />
    </g>
  ),
  curvebox: (
    <g fill="none">
      <rect x="1" y="3" width="22" height="18" fill="#0d0d0d" stroke="#777" />
      <path d="M2 12h3l3-4 4 9 4-9 3 4h3" stroke="#d8b53a" strokeWidth="1.500" />
    </g>
  ),
}

function Ico({ n, s = 'size-[18px]' }: { n: string; s?: string }) {
  return (
    <svg viewBox="0 0 24 24" className={clsx('shrink-0', s)} aria-hidden="true">
      {art[n]}
    </svg>
  )
}

function Corner({ dir = 'down' }: { dir?: 'down' | 'right' | 'ink' }) {
  return (
    <svg viewBox="0 0 8 8" className="absolute bottom-0 right-0 size-[7px]" aria-hidden="true">
      {dir === 'down' ? <path d="M0 1h8L4 7z" fill="#989898" /> : <path d="M1 0v8l6-4z" fill={dir === 'ink' ? '#1d232b' : '#909090'} />}
    </svg>
  )
}

function UpDown() {
  return (
    <svg viewBox="0 0 8 16" className="h-[14px] w-[8px]" aria-hidden="true">
      <path d="M4 0l4 7H0zM4 16l4-7H0z" fill="#8d8d8d" />
    </svg>
  )
}

function Tri({ c = '#d5d5d5', s = 'size-[7px]' }: { c?: string; s?: string }) {
  return (
    <svg viewBox="0 0 8 8" className={clsx('shrink-0', s)} aria-hidden="true">
      <path d="M0 1h8L4 7.500z" fill={c} />
    </svg>
  )
}

function Plus() {
  return (
    <button aria-label="Add tab" className="flex w-[28px] items-center justify-center">
      <svg viewBox="0 0 10 10" className="size-[9px]"><path d="M5 0v10M0 5h10" stroke="#e0e0e0" strokeWidth="2.400" /></svg>
    </button>
  )
}

// collapse handle in front of a tool bar
function Grip({ h = 'w-[9px]' }: { h?: string }) {
  return (
    <button aria-label="Collapse" className={clsx('flex shrink-0 justify-center border border-[#5a5a5a] border-b-black border-r-black bg-[#434343]', h)}>
      <svg viewBox="0 0 8 8" className="mt-px size-[7px]"><path d="M4 0l4 7H0z" fill="#050505" /></svg>
    </button>
  )
}

type Tool = [icon: string, label: string, width: string]

const leftTabs: [string, string][] = [
  ['Create', 'w-[42px]'], ['Modify', 'w-[42px]'], ['Model', 'w-[40px]'], ['Polygon', 'w-[48px]'], ['Deform', 'w-[45px]'],
  ['Texture', 'w-[46px]'], ['Rigging', 'w-[45px]'], ['Characters', 'w-[58px]'], ['Constraints', 'w-[61px]'], ['Hair Utils', 'w-[52px]'],
  ['Guide Process', 'w-[71px]'], ['Terrain FX', 'w-[55px]'], ['Simple FX', 'w-[54px]'], ['Volume', 'w-[46px]'],
]

const rightTabs: [string, string][] = [
  ['Lights and Cameras', 'w-[92px]'], ['Collisions', 'w-[54px]'], ['Particles', 'w-[50px]'], ['Grains', 'w-[41px]'], ['Vellum', 'w-[43px]'],
  ['Rigid Bodies', 'w-[64px]'], ['Particle Fluids', 'w-[71px]'], ['Viscous Fluids', 'w-[71px]'], ['Oceans', 'w-[45px]'], ['Pyro FX', 'w-[45px]'],
  ['FEM', 'w-[32px]'], ['Wires', 'w-[37px]'], ['Crowds', 'w-[45px]'], ['Drive Simulation', 'w-[81px]'],
]

const leftTools: Tool[] = [
  ['box', 'Box', 'w-[41px]'], ['sphere', 'Sphere', 'w-[41px]'], ['tube', 'Tube', 'w-[41px]'], ['torus', 'Torus', 'w-[41px]'],
  ['grid', 'Grid', 'w-[41px]'], ['null', 'Null', 'w-[41px]'], ['line', 'Line', 'w-[41px]'], ['circle', 'Circle', 'w-[41px]'],
  ['bezier', 'Curve Bezier', 'w-[58px]'], ['draw', 'Draw Curve', 'w-[56px]'], ['path', 'Path', 'w-[40px]'], ['spray', 'Spray Paint', 'w-[58px]'],
  ['font', 'Font', 'w-[36px]'], ['platonic', 'Platonic Solids', 'w-[74px]'], ['lsystem', 'L-System', 'w-[38px]'], ['metaball', 'Metaball', 'w-[52px]'],
  ['file', 'File', 'w-[32px]'], ['spiral', 'Spiral', 'w-[50px]'], ['helix', 'Helix', 'w-[34px]'], ['quick', 'Quick Shapes', 'w-[68px]'],
]

const rightTools: Tool[] = [
  ['moviecam', 'Camera', 'w-[40px]'], ['point', 'Point Light', 'w-[54px]'], ['spot', 'Spot Light', 'w-[50px]'], ['area', 'Area Light', 'w-[50px]'],
  ['geo', 'Geometry Light', 'w-[64px]'], ['volume', 'Volume Light', 'w-[66px]'], ['distant', 'Distant Light', 'w-[54px]'], ['env', 'Environment Light', 'w-[74px]'],
  ['sky', 'Sky Light', 'w-[38px]'], ['gi', 'GI Light', 'w-[50px]'], ['caustic', 'Caustic Light', 'w-[50px]'], ['portal', 'Portal Light', 'w-[68px]'],
  ['ambient', 'Ambient Light', 'w-[52px]'], ['stereo', 'Stereo Camera', 'w-[82px]'], ['vr', 'VR Camera', 'w-[36px]'], ['switcher', 'Switcher', 'w-[60px]'],
]

// these labels take two lines under their icon
const twoLine = ['Platonic Solids', 'Geometry Light', 'Environment Light', 'Stereo Camera']

function ShelfTabs({ tabs }: { tabs: [string, string][] }) {
  return (
    <div className="flex h-[18px] bg-[#2b2b2b]">
      {tabs.map(([t, w], i) => (
        <button
          key={t}
          className={clsx(
            'shrink-0 whitespace-nowrap border-r border-black text-center text-[9px] leading-[18px]',
            w,
            i === 0 ? 'bg-[#434343]' : 'border-b border-t border-t-[#555] bg-[#2d2d2d]'
          )}
        >
          {t}
        </button>
      ))}
      <Plus />
      <span className="ml-auto flex w-[12px] items-center"><Tri /></span>
    </div>
  )
}

function ShelfTools({ tools }: { tools: Tool[] }) {
  return (
    <>
      {tools.map(([icon, label, w]) => (
        <button key={label} className={clsx('flex h-[39px] shrink-0 flex-col items-center', w)}>
          <span className="pt-[3px]"><Ico n={icon} s={twoLine.includes(label) ? 'size-[16px]' : 'size-[20px]'} /></span>
          {twoLine.includes(label) ? (
            label.split(' ').map(l => <span key={l} className="whitespace-nowrap text-[9px] leading-[9px]">{l}</span>)
          ) : (
            <span className="whitespace-nowrap text-[9px] leading-[13px]">{label}</span>
          )}
        </button>
      ))}
    </>
  )
}

function Shelves() {
  return (
    <div className="flex h-[58px] shrink-0 border-b border-black bg-[#3c3c3c]">
      <Grip />
      <div className="flex min-w-0 grow-[954] basis-0 flex-col">
        <ShelfTabs tabs={leftTabs} />
        <div className="flex overflow-hidden bg-linear-to-b from-[#464646] to-[#363636] pl-px"><ShelfTools tools={leftTools} /></div>
      </div>
      <div className="flex w-[10px] shrink-0 items-center justify-center border-x border-black bg-[#454545]">
        <DotGrip cols={3} rows={5} c="bg-black" />
      </div>
      <div className="flex min-w-0 grow-[944] basis-0 flex-col">
        <ShelfTabs tabs={rightTabs} />
        <div className="flex overflow-hidden bg-linear-to-b from-[#464646] to-[#363636] pl-[18px]">
          <ShelfTools tools={rightTools} />
          <button className="relative flex h-[39px] w-[22px] shrink-0 flex-col items-center overflow-hidden">
            <span className="pt-[3px]"><Ico n="gamepad" s="size-[16px]" /></span>
            <span className="text-[9px] leading-[9px]">Gan</span>
            <span className="text-[9px] leading-[9px]">Ca</span>
          </button>
          <span className="ml-auto flex w-[14px] items-center">
            <svg viewBox="0 0 8 8" className="size-[8px]"><path d="M0 0v8l8-4z" fill="#9a9a9a" /></svg>
          </span>
        </div>
      </div>
    </div>
  )
}

function DotGrip({ cols, rows, c = 'bg-[#8a8a8a]' }: { cols: number; rows: number; c?: string }) {
  return (
    <div className="flex gap-px">
      {Array.from({ length: cols }, (_, x) => (
        <div key={x} className="flex flex-col gap-px">
          {Array.from({ length: rows }, (_, y) => <i key={y} className={clsx('block size-px', c)} />)}
        </div>
      ))}
    </div>
  )
}

function TopSelect({ label, icon, w, value }: { label: string; icon: string; w: string; value: string }) {
  return (
    <label className={clsx('relative flex h-[23px] shrink-0 items-center border-l border-t border-[#5a5a5a] bg-linear-to-b from-[#484848] to-[#3d3d3d]', w)}>
      <span className="pl-[4px]"><Ico n={icon} s="size-[15px]" /></span>
      <select aria-label={label} className="h-full min-w-0 flex-1 appearance-none bg-transparent pl-[5px] text-[12px] leading-[22px] outline-none">
        <option>{value}</option>
      </select>
      <span className="flex h-full w-[24px] items-center justify-center bg-[#333]"><UpDown /></span>
    </label>
  )
}

const menus: [string, string][] = [
  ['File', 'w-[29px]'], ['Edit', 'w-[31px]'], ['Render', 'w-[49px]'], ['Assets', 'w-[44px]'],
  ['Windows', 'w-[60px]'], ['Labs', 'w-[35px]'], ['Help', 'w-[51px]'],
]

function MenuBar() {
  return (
    <div className="flex h-[26px] shrink-0 items-stretch border-b border-black bg-linear-to-b from-[#3c3c3c] to-[#303030]">
      <Grip />
      <nav className="flex items-center pl-[6px]">
        {menus.map(([m, w]) => (
          <button key={m} className={clsx('whitespace-nowrap text-left text-[12px] leading-[24px]', w)}>{m}</button>
        ))}
      </nav>
      <div className="flex items-center gap-[2px]">
        <TopSelect label="Desktop" icon="layout" w="w-[130px]" value="Build" />
        <TopSelect label="Radial menu" icon="radial" w="w-[128px]" value="Main" />
      </div>
      <div className="ml-auto flex items-center gap-[9px] pr-[9px]">
        <TopSelect label="Take" icon="clapper" w="w-[172px]" value="Main" />
        <button aria-label="Help"><Ico n="help" s="size-[15px]" /></button>
      </div>
    </div>
  )
}

function PaneTabs({ tabs, italic }: { tabs: [string, string][]; italic?: boolean }) {
  return (
    <div className="flex h-[18px] shrink-0 bg-[#2d2d2d]">
      {tabs.map(([t, w], i) => (
        <div key={t} className={clsx('flex shrink-0 items-center justify-between border-r-2 border-[#202020] pl-[6px] pr-[5px]', w, i === 0 ? 'bg-[#464646]' : 'bg-[#313131]')}>
          <button className={clsx('whitespace-nowrap text-[10px] leading-[18px]', i === 0 && italic && 'italic')}>{t}</button>
          <button aria-label={`Close ${t}`}>
            <svg viewBox="0 0 6 6" className="size-[5px]"><path d="M0 0l6 6M6 0L0 6" stroke="#ddd" strokeWidth="1.600" /></svg>
          </button>
        </div>
      ))}
      <Plus />
      <div className="ml-auto flex items-center gap-[9px] pr-[6px]">
        <button aria-label="Maximize pane" className="h-[8px] w-[10px] bg-[#d8d8d4]" />
        <Tri />
      </div>
    </div>
  )
}

function PathBar({ icon, value, label, children }: { icon: string; value: string; label: string; children?: ReactNode }) {
  return (
    <div className="flex h-[35px] shrink-0 items-center border-b border-black bg-linear-to-b from-[#464646] to-[#383838] pl-[5px]">
      <button aria-label="Back" className="relative w-[17px]"><Ico n="back" s="size-[15px]" /><Corner dir="right" /></button>
      <button aria-label="Forward" className="ml-[8px] mr-[9px]"><Ico n="fwd" s="size-[15px]" /></button>
      <div className="flex h-[25px] min-w-0 flex-1 items-center border border-black bg-[#393939] pl-[5px]">
        <Ico n={icon} s="size-[17px]" />
        <input aria-label={label} defaultValue={value} className="h-full min-w-0 flex-1 bg-transparent pl-[5px] text-[11px] text-[#ddd] outline-none" />
        <button aria-label="Path history" className="flex h-full w-[18px] items-center justify-center bg-[#2f2f2f]"><Tri c="#8a8a8a" s="size-[8px]" /></button>
      </div>
      <div className="flex items-center gap-[7px] pl-[9px] pr-[5px]">
        <button aria-label="Pin"><Ico n="pin" s="size-[17px]" /></button>
        <button aria-label="Link"><Ico n="target" s="size-[16px]" /></button>
        {children}
      </div>
    </div>
  )
}

const viewTools: [string, boolean][] = [
  ['arrow', true], ['lock', false], ['move', false], ['rotate', false], ['scale', false], ['pose', false], ['handle', true],
]

const snapTools = ['magnetgrid', 'magnetcurve', 'magnetpoint', 'magnet']

function SideButton({ n, on, corner, h = 'h-[28px]', s = 'size-[20px]' }: { n: string; on?: boolean; corner?: boolean; h?: string; s?: string }) {
  return (
    <button
      aria-label={n}
      className={clsx('relative mx-auto flex w-[26px] shrink-0 items-center justify-center', h, on && 'border border-[#2a2f36] bg-linear-to-b from-[#56708f] to-[#7490ad]')}
    >
      <Ico n={n} s={s} />
      {corner && <Corner dir={on ? 'ink' : 'right'} />}
    </button>
  )
}

function LeftTools() {
  return (
    <div className="flex w-[34px] shrink-0 flex-col bg-[#393939]">
      <button aria-label="Collapse" className="h-[10px] border border-[#5a5a5a] border-b-black bg-[#434343]">
        <svg viewBox="0 0 8 8" className="ml-px size-[7px]"><path d="M7 0v8L0 4z" fill="#050505" /></svg>
      </button>
      <div className="mx-auto mt-[4px] flex w-[26px] flex-col border border-black bg-[#4a4a4a]">
        <SideButton n="cone" on corner h="h-[24px]" s="size-[19px]" />
        <SideButton n="diamonds" corner h="h-[24px]" s="size-[17px]" />
        <SideButton n="ycube" corner h="h-[24px]" s="size-[18px]" />
      </div>
      <hr className="my-[5px] border-[#555]" />
      {viewTools.map(([n, corner]) => <SideButton key={n} n={n} corner={corner} on={n === 'lock'} />)}
      <hr className="mx-[3px] my-[3px] border-[#555]" />
      {snapTools.map(n => <SideButton key={n} n={n} corner />)}
      <hr className="mx-[3px] my-[4px] border-[#555]" />
      <SideButton n="moviecam" on corner />
      <SideButton n="globe" />
      <SideButton n="domelight" corner />
      <div className="mt-auto flex flex-col pb-[2px]">
        <SideButton n="papers" corner h="h-[26px]" s="size-[17px]" />
        <SideButton n="reel" corner h="h-[26px]" s="size-[18px]" />
      </div>
    </div>
  )
}

const displayTools: [string, string][] = [
  ['plane', 'on'], ['greenplane', 'c'], ['padlock', ''], ['bulbx', ''], ['clay', 'c'], ['bulbplus', 'on'], ['bulbring', 'c'],
  ['checkcube', 'on'], ['glasses', 'c'], ['glasses2', 'c'], ['-', ''], ['dot', ''], ['normal', ''], ['needle', ''], ['ptnum', ''],
  ['primnormal', ''], ['primnum', ''], ['hull', ''], ['backface', ''], ['checker', 'c'], ['bluediamond', ''], ['greenhull', ''],
  ['tripod', ''], ['listcircle', ''], ['bgimage', 'on'], ['-', ''], ['marker', 'on'],
]

function DisplayTools() {
  return (
    <div className="flex w-[27px] shrink-0 flex-col border-r-2 border-black bg-[#393939]">
      <button aria-label="Collapse" className="flex h-[10px] justify-end border border-[#5a5a5a] border-b-black bg-[#434343]">
        <svg viewBox="0 0 8 8" className="size-[7px]"><path d="M1 0v8l7-4z" fill="#050505" /></svg>
      </button>
      {displayTools.map(([n, m], i) =>
        n === '-' ? (
          <hr key={i} className={clsx('border-[#555]', i < 20 ? 'mt-[2px]' : 'my-[5px]')} />
        ) : (
          <SideButton key={n} n={n} on={m === 'on'} corner={m !== ''} h="h-[25px]" s="size-[17px]" />
        )
      )}
      <hr className="mb-[2px] mt-auto border-[#555]" />
      <SideButton n="info" h="h-[25px]" s="size-[16px]" />
      <SideButton n="quadview" on h="h-[25px]" s="size-[16px]" />
      <SideButton n="eye" corner h="h-[25px]" s="size-[16px]" />
    </div>
  )
}

const VX = 508
const VY = 360

// ground plane in perspective, fading out towards the horizon
function SceneGrid() {
  const rows = Array.from({ length: 34 }, (_, k) => VY + 1 / (0.002817 + 0.00095 * k))
  const cols = Array.from({ length: 61 }, (_, k) => k - 30)
  return (
    <svg viewBox="0 0 969 750" preserveAspectRatio="none" className="absolute inset-0 size-full" aria-hidden="true">
      <defs>
        <linearGradient id="fog" x1="0" y1="0" x2="0" y2="1">
          <stop offset="0.530" stopColor="#000" />
          <stop offset="0.570" stopColor="#777" />
          <stop offset="0.660" stopColor="#fff" />
        </linearGradient>
        <mask id="ground"><rect width="969" height="750" fill="url(#fog)" /></mask>
      </defs>
      <g mask="url(#ground)" fill="none" stroke="#5d7078" strokeOpacity=".55">
        {rows.map((y, i) => (
          <path key={y} d={`M0 ${y - (y - VY) * 0.014}L969 ${y + (y - VY) * 0.011}`} strokeWidth={i % 5 === 2 ? 2 : 1.2} />
        ))}
        {cols.map(k => (
          <path key={k} d={`M${VX + (34.6 + 185.6 * k) * 0.19} 400L${VX + (34.6 + 185.6 * k) * 1.9} 763`} strokeWidth={k % 5 === 0 ? 2 : 1.2} />
        ))}
      </g>
      <g fontFamily="Noto Sans" fontWeight="bold" fontSize="18" textAnchor="middle">
        <text x="508" y="569" fill="#a05a5a" fillOpacity=".75">0</text>
        <text x="590" y="588" fill="#7878a8" fillOpacity=".8">0</text>
        <text x="564" y="636" fill="#6d7890" fillOpacity=".5" fontSize="12">25</text>
        <text x="584" y="733" fill="#6d7890" fillOpacity=".6">50</text>
        <text x="550" y="480" fill="#4f5f70" fillOpacity=".5" fontSize="12">-125</text>
      </g>
    </svg>
  )
}

function Viewport() {
  return (
    <div className="relative min-w-0 flex-1 overflow-hidden bg-linear-to-b from-[#647e8a] via-[#93a5ad] via-55% to-[#c3cac9]">
      <SceneGrid />
      <div className="absolute inset-0 flex">
        <div className="w-[109px] bg-[#262626]/44" />
        <div className="flex-1" />
        <div className="w-[109px] bg-[#262626]/44" />
      </div>
      <div className="relative flex items-start justify-between pl-[16px] pr-[6px]">
        <div className="flex items-center gap-[9px] pt-[14px]">
          <Ico n="moviecam" s="size-[25px]" />
          <span className="font-['Noto_Sans'] text-[14px] font-bold leading-[20px] text-white [text-shadow:1px_2px_2px_#000]">View</span>
        </div>
        <div className="flex gap-[6px] pt-[5px]">
          {['Persp', 'cam1'].map(t => (
            <button key={t} className="flex h-[20px] items-center gap-[4px] rounded-full border border-[#aab2b5] bg-[#3b474d]/60 px-[6px] text-[11px] text-[#e4e4e4]">
              {t} <Tri c="#eee" s="size-[6px]" />
            </button>
          ))}
        </div>
      </div>
      <svg viewBox="0 0 24 24" className="absolute bottom-[12px] left-[12px] size-[24px] overflow-visible" fontFamily="Noto Sans" fontSize="10" aria-hidden="true">
        <path d="M3 21V9" stroke="#2f9a2f" strokeWidth="1.500" />
        <path d="M3 21h13" stroke="#b02a2a" strokeWidth="1.500" />
        <text x="4" y="6" fill="#2f9a2f">y</text>
        <text x="4" y="20" fill="#1c1ca8">z</text>
        <text x="17" y="20" fill="#b02a2a">x</text>
      </svg>
    </div>
  )
}

function ViewBar() {
  return (
    <div className="flex h-[32px] shrink-0 border-b border-black bg-[#2e2e2e]">
      <Grip />
      <div className="flex min-w-0 flex-1 items-center border-t border-[#555] pl-[4px]">
        <div className="flex grow-[379] basis-0"><button aria-label="Tool menu" className="relative w-[20px]"><Ico n="dots9" /><Corner /></button></div>
        <div className="flex items-center">
          {['selobj', 'selcurve', 'seledge'].map(n => (
            <button key={n} aria-label={n} className="relative mr-[13px] w-[20px]"><Ico n={n} /><Corner /></button>
          ))}
          <span className="-ml-[6px] mr-[5px] h-[23px] w-px bg-[#555]" />
          <button aria-label="View tool" className="flex h-[24px] w-[22px] items-center justify-center bg-[#6480a0]"><Ico n="camwhite" /></button>
          <button aria-label="Frame" className="ml-[6px] mr-[8px]"><Ico n="zoombox" s="size-[16px]" /></button>
          <span className="h-[23px] w-px bg-[#555]" />
          <button aria-label="Stop" className="mx-[8px]"><Ico n="nocam" s="size-[17px]" /></button>
          <span className="h-[23px] w-px bg-[#555]" />
          <button aria-label="Snapshot" className="ml-[8px]"><Ico n="flycam" /></button>
          <button aria-label="Options" className="ml-[8px]"><Ico n="gearbox" s="size-[15px]" /></button>
        </div>
        <div className="flex grow-[407] basis-0 items-center justify-end gap-[6px] pr-[6px]">
          <button aria-label="Users" className="relative w-[20px]"><Ico n="people" s="size-[16px]" /><Corner /></button>
          <button aria-label="Help"><Ico n="help" s="size-[15px]" /></button>
        </div>
      </div>
    </div>
  )
}

const sceneTabs: [string, string][] = [
  ['Scene View', 'w-[83px]'], ['Animation Editor', 'w-[107px]'], ['Render View', 'w-[88px]'], ['Composite View', 'w-[102px]'],
  ['Motion FX View', 'w-[98px]'], ['Geometry Spreadsheet', 'w-[129px]'],
]

function ScenePane() {
  return (
    <section className="flex min-w-0 grow-[1031] basis-0 flex-col">
      <PaneTabs tabs={sceneTabs} />
      <PathBar icon="clapper" value="obj" label="Scene path">
        <button aria-label="Shading" className="relative ml-[10px] w-[18px]"><Ico n="box" s="size-[17px]" /><Corner /></button>
        <button aria-label="Display" className="relative w-[18px]"><Ico n="shapes" s="size-[16px]" /><Corner /></button>
        <button aria-label="Background" className="relative w-[17px]"><Ico n="whitesq" s="size-[16px]" /><Corner /></button>
      </PathBar>
      <ViewBar />
      <div className="flex min-h-0 flex-1">
        <LeftTools />
        <Viewport />
        <DisplayTools />
      </div>
    </section>
  )
}

const box = 'h-[23px] min-w-0 border border-[#2a2a2a] pl-[4px] text-[#e6e6e6] outline-none'
const field = `${box} bg-[#131313]`
const mono = 'font-["Liberation_Mono"] text-[12px]'
const bold = 'text-[12px] font-bold'

function Row({ label, id, h = 'h-[25px]', dim, lit, children }: { label: string; id?: string; h?: string; dim?: boolean; lit?: boolean; children: ReactNode }) {
  return (
    <div className={clsx('flex items-center pr-[9px]', h)}>
      <label htmlFor={id} className={clsx('ml-[15px] mr-[9px] w-[128px] shrink-0 whitespace-nowrap pr-[6px] text-right text-[11px] leading-[19px]', dim && 'text-[#6e6e6e]', lit && 'bg-[#505050]')}>
        {label}
      </label>
      <div className="flex min-w-0 flex-1 items-center gap-[2px]">{children}</div>
    </div>
  )
}

function ParmSelect({ id, value, w, strong }: { id: string; value: string; w: string; strong?: boolean }) {
  return (
    <span className={clsx('flex h-[21px] shrink-0 border border-[#222] border-l-[#666] bg-linear-to-b from-[#4d4d4d] to-[#3b3b3b]', w)}>
      <select id={id} className={clsx('min-w-0 flex-1 appearance-none bg-transparent pl-[14px] text-[11px] outline-none', strong && 'font-bold')}>
        <option>{value}</option>
      </select>
      <span className="flex w-[20px] items-center justify-center bg-[#333]"><UpDown /></span>
    </span>
  )
}

function Drop({ label }: { label: string }) {
  return (
    <button aria-label={label} className="flex h-[20px] w-[18px] shrink-0 items-center justify-center border border-[#2a2a2a] bg-[#424242]">
      <Tri c="#8a8a8a" />
    </button>
  )
}

function Check({ id, label }: { id: string; label: string }) {
  return (
    <>
      <input id={id} type="checkbox" className="size-[14px] shrink-0 appearance-none border border-[#2a2a2a] bg-[#131313]" />
      <label htmlFor={id} className="whitespace-nowrap pl-[5px] text-[11px] leading-[20px]">{label}</label>
    </>
  )
}

const actions: [string, string][] = [
  ['Karma Viewport', 'w-[113px]'], ['Render to Disk', 'w-[105px]'], ['Render to MPlay', 'w-[114px]'],
  ['Render to Disk in Background', 'w-[179px]'], ['Controls...', 'w-[84px]'],
]

const folders: [string, string][] = [
  ['Rendering', 'w-[65px]'], ['Objects', 'w-[53px]'], ['Image Output', 'w-[84px]'], ['Deep Output', 'w-[79px]'], ['Advanced', 'w-[64px]'],
]

function Parameters() {
  return (
    <div className="flex h-[334px] shrink-0 bg-[#3a3a3a]">
      <div className="flex min-w-0 flex-1 flex-col pl-[2px]">
        <div className="flex gap-[4px] pl-[17px] pt-[3px]">
          {actions.map(([a, w]) => (
            <button key={a} className={clsx('h-[21px] whitespace-nowrap border border-[#242424] border-l-[#5c5c5c] border-t-[#5c5c5c] bg-linear-to-b from-[#4b4b4b] to-[#3b3b3b] text-[11px] leading-[17px]', w)}>{a}</button>
          ))}
        </div>
        <div className="pt-[3px]">
          <Row label="Valid Frame Range" id="range" h="h-[26px]"><ParmSelect id="range" value="Render Frame Range" w="w-[213px]" strong /></Row>
        </div>
        <Row label="Start/End/Inc" id="start" lit>
          <input id="start" defaultValue="$FSTART" className={clsx(box, mono, 'flex-1 bg-[#40807f]')} />
          <input aria-label="End frame" defaultValue="64" className={clsx(field, bold, 'flex-1')} />
          <input aria-label="Frame increment" defaultValue="1" className={clsx(field, mono, 'flex-1')} />
        </Row>
        <Row label="Preroll/Postroll/Inc" id="pre" dim>
          {['0', '0', '1'].map((v, i) => (
            <input key={i} id={i === 0 ? 'pre' : undefined} aria-label={['Preroll', 'Postroll', 'Increment'][i]} disabled defaultValue={v} className={clsx(mono, 'h-[23px] min-w-0 flex-1 border border-[#2c2c2c] bg-[#303030] pl-[4px] text-[#4c4c4c]')} />
          ))}
        </Row>
        <div className="flex h-[22px] items-center gap-[2px] pl-[152px]"><Check id="single" label="Render All Frames With a Single Process" /></div>
        <h2 className="mb-[4px] h-[24px] bg-[#4f4f4f] pl-[20px] text-[11px] font-bold leading-[24px]">Common Settings</h2>
        <Row label="Output Picture" id="picture" h="h-[26px]">
          <input id="picture" defaultValue="$HIP/render/$HIPNAME.$OS.$F4.exr" className={clsx(field, mono, 'flex-1')} />
          <Drop label="Output picture menu" />
          <button aria-label="Choose file" className="ml-[6px] mr-px"><Ico n="chooser" s="size-[16px]" /></button>
        </Row>
        <Row label="Camera" id="camera">
          <input id="camera" defaultValue="/obj/cam1" className={clsx(field, mono, 'mr-[3px] flex-1')} />
          <button aria-label="Jump to camera"><Ico n="jump" s="size-[16px]" /></button>
          <button aria-label="Choose camera" className="ml-[5px] mr-px"><Ico n="nodechooser" s="size-[17px]" /></button>
        </Row>
        <Row label="Resolution" id="resx">
          <input id="resx" defaultValue="512" className={clsx(field, bold, 'flex-1')} />
          <input aria-label="Vertical resolution" defaultValue="512" className={clsx(field, bold, 'flex-1')} />
          <Drop label="Resolution menu" />
        </Row>
        <div className="pt-[7px]">
          <Row label="Rendering Engine" id="engine" h="h-[27px]">
            <ParmSelect id="engine" value="CPU Parameters" w="w-[130px]" />
            <Check id="simple" label="Simplified Shading" />
          </Row>
        </div>
        <Row label="Primary Samples" id="samples">
          <input id="samples" defaultValue="9" className={clsx(field, mono, 'w-[74px]')} />
          <div className="relative flex h-[23px] flex-1 items-center">
            <div className="absolute inset-x-[2px] bottom-[4px] flex justify-between">
              {Array.from({ length: 52 }, (_, i) => <i key={i} className="block h-[3px] w-px bg-[#999]" />)}
            </div>
            <div className="absolute inset-x-0 h-[5px] border border-black bg-linear-to-r from-[#1550a0] from-3% to-black to-3%" />
            <input
              type="range"
              aria-label="Primary samples slider"
              min="1"
              max="255"
              defaultValue="9"
              className="relative h-[22px] w-full appearance-none bg-transparent [&::-webkit-slider-thumb]:h-[21px] [&::-webkit-slider-thumb]:w-[6px] [&::-webkit-slider-thumb]:appearance-none [&::-webkit-slider-thumb]:border [&::-webkit-slider-thumb]:border-black [&::-webkit-slider-thumb]:bg-[#8a8a8a]"
            />
          </div>
        </Row>
        <div className="mt-auto flex border-b border-[#555]">
          {folders.map(([f, w], i) => (
            <button key={f} className={clsx('h-[22px] whitespace-nowrap border border-r-0 border-[#242424] text-[11px] leading-[20px]', w, i === 0 ? 'bg-[#464646]' : 'bg-linear-to-b from-[#464646] to-[#343434]')}>{f}</button>
          ))}
        </div>
        <div className="h-[7px]" />
      </div>
      <div className="flex w-[16px] shrink-0 flex-col bg-[#262626] pr-[2px]">
        <div className="flex h-[121px] items-center justify-center border border-[#5a5a5a] bg-[#474747]"><DotGrip cols={4} rows={6} c="bg-black" /></div>
        <div className="flex-1" />
        <div className="flex h-[18px] items-center justify-center border-t border-black bg-[#343434]">
          <svg viewBox="0 0 8 8" className="size-[6px]"><path d="M4 1l3 6H1z" fill="none" stroke="#4a4a4a" /></svg>
        </div>
        <button aria-label="Scroll down" className="flex h-[18px] items-center justify-center border border-black bg-[#454545]"><Tri c="#8f8f8f" /></button>
      </div>
    </div>
  )
}

const RED = '#ff5361'

function Marks() {
  return (
    <svg className="pointer-events-none absolute left-0 top-0 h-px w-px overflow-visible" aria-hidden="true">
      <g transform="translate(-1043 -95)">
        <g fill="none" stroke={RED} strokeWidth="4">
          <rect x="1184" y="204" width="271" height="25" rx="2" />
          <rect x="1072" y="323" width="121" height="31" rx="2" />
          <rect x="1118" y="355" width="74" height="25" rx="2" />
        </g>
        <g fill={RED}>
          <path d="M1247 180L1265 160 1268 166 1501 91 1272 178 1273 185z" />
          <path d="M1217 243L1206 240 1207 243 1106 278 1208 248 1209 251z" />
          <path d="M1177 391L1168 387 1169 390 1089 401 1169 393 1169 395z" />
          <path d="M1511 244L1510 250 1512 249 1532 298 1514 248 1516 248z" />
          <path d="M1611 401L1624 398 1624 401 1738 447 1621 408 1619 410z" />
        </g>
      </g>
    </svg>
  )
}

const netMenus: [string, string][] = [
  ['Add', 'w-[36px]'], ['Edit', 'w-[36px]'], ['Go', 'w-[30px]'], ['View', 'w-[40px]'], ['Tools', 'w-[44px]'],
  ['Layout', 'w-[49px]'], ['Labs', 'w-[38px]'], ['Help', 'w-[40px]'],
]

function ToolGroup({ names }: { names: string[] }) {
  return (
    <div className="flex gap-[8px]">
      {names.map(n => <button key={n} aria-label={n}><Ico n={n} s="size-[16px]" /></button>)}
    </div>
  )
}

function Network() {
  return (
    <>
      <div className="flex h-[25px] shrink-0 border-b border-black bg-linear-to-b from-[#3c3c3c] to-[#303030]">
        <Grip />
        <nav className="flex items-center pl-[9px]">
          {netMenus.map(([m, w]) => <button key={m} className={clsx('text-left text-[12px] leading-[24px]', w)}>{m}</button>)}
        </nav>
        <div className="ml-auto flex items-center gap-[25px] pr-[5px]">
          <ToolGroup names={['wrench', 'tree', 'rows']} />
          <ToolGroup names={['palette', 'listbox']} />
          <ToolGroup names={['netbox', 'note', 'imageplus', 'basket']} />
          <ToolGroup names={['search', 'eye']} />
        </div>
      </div>
      <div className="relative min-h-0 flex-1 overflow-hidden bg-[#303030]">
        <div className="absolute right-[10px] top-[11px] text-[23px] font-bold leading-[32px] text-[#565656]">Outputs</div>
        <div className="absolute left-[214px] top-[45px] flex h-[100px] w-[485px] flex-col overflow-hidden rounded-[9px] border border-[#d8d27a] bg-[#bfba6b]">
          <div className="h-[21px] bg-[#e8e27b]">
            <button aria-label="Collapse note" className="flex h-full w-[27px] items-center justify-end border-r border-[#f4ef9a] pr-[2px]"><i className="block h-[3px] w-[15px] bg-black" /></button>
          </div>
          <p className="px-[4px] pt-[7px] text-[19px] leading-[23px] text-[#151515]">给完材质后创建karma渲染器，详细karma学习请关注其他karma教程，这里只是讲一下快速流程</p>
        </div>
        <div className="absolute left-[367px] top-[177px] h-[9px] w-[72px] rounded-full bg-[#a9a9a9]" />
        <div className="absolute left-[357px] top-[186px] flex h-[32px] w-[92px] items-center justify-center rounded-[5px] border-2 border-[#f2cc00] bg-[#c9c9c9] outline outline-[#6a5c10]">
          <svg viewBox="0 0 88 28" className="absolute inset-0 size-full" aria-hidden="true">
            <path d="M13 1L9 27M26 1l-3 26M77 1l-3 26" stroke="#6e6e6e" />
            <rect x=".5" y=".5" width="87" height="27" rx="3" fill="none" stroke="#1c1c1c" />
          </svg>
          <span className="relative"><Ico n="karma" s="size-[24px]" /></span>
        </div>
        <div className="absolute left-[398px] top-[218px] size-[9px] rounded-full bg-[#a9a9a9]" />
        <div className="absolute left-[455px] top-[187px] text-[18px] leading-[26px] text-[#c8c8c8]">karma1</div>
        <svg viewBox="0 0 24 24" className="absolute left-[458px] top-[215px] size-[13px]" aria-hidden="true">
          <path d="M7 11V7a5 5 0 0 1 10 0v4" fill="none" stroke="#777" strokeWidth="2" />
          <path d="M4 11h16v11H4z" fill="#5c6a62" stroke="#8a8a8a" />
        </svg>
      </div>
    </>
  )
}

const parmTabs: [string, string][] = [['karma1', 'w-[69px]'], ['Take List', 'w-[74px]'], ['Performance Monitor', 'w-[123px]']]
const netTabs: [string, string][] = [['/out', 'w-[56px]'], ['Tree View', 'w-[77px]'], ['Material Palette', 'w-[101px]'], ['Asset Browser', 'w-[94px]']]

function RightPane() {
  return (
    <section className="relative flex min-w-0 grow-[877] basis-0 flex-col">
      <PaneTabs tabs={parmTabs} italic />
      <PathBar icon="reel" value="out" label="Parameter path" />
      <div className="flex h-[27px] shrink-0 items-center border-b border-black bg-[#3a3a3a] pl-[5px] pr-[7px]">
        <button aria-label="Node type" className="relative w-[19px]"><Ico n="karma" s="size-[17px]" /><Corner /></button>
        <label htmlFor="nodename" className="px-[3px] text-[11px] font-bold">Karma</label>
        <input id="nodename" defaultValue="karma1" className={clsx(field, mono, 'mr-[8px] flex-1')} />
        <div className="flex items-center gap-[9px]">
          <button aria-label="Gear menu" className="relative w-[18px]"><Ico n="gear" s="size-[15px]" /><Corner /></button>
          <button aria-label="Brush" className="relative w-[18px]"><Ico n="brush" s="size-[16px]" /><Corner /></button>
          <button aria-label="Search"><Ico n="search" s="size-[16px]" /></button>
          <button aria-label="Info" className="px-px"><Ico n="info" s="size-[16px]" /></button>
          <button aria-label="Help"><Ico n="help" s="size-[15px]" /></button>
        </div>
      </div>
      <Parameters />
      <div className="flex h-[8px] shrink-0 items-center justify-center gap-[18px] border border-[#7a7a7a] border-b-[#222] border-r-0 bg-[#3f3f3f]">
        <svg viewBox="0 0 8 8" className="size-[5px]"><path d="M4 1l4 6H0z" fill="#999" /></svg>
        <DotGrip cols={11} rows={3} />
        <Tri c="#999" s="size-[5px]" />
      </div>
      <PaneTabs tabs={netTabs} italic />
      <PathBar icon="reel" value="out" label="Network path" />
      <Network />
      <Marks />
    </section>
  )
}

const playButtons = ['first', 'playback', 'stop', 'play', 'last']
const optButtons = ['winsel', 'speaker', 'loop', 'clock', 'bars', 'keyset']
const tbtn = 'flex h-[28px] items-center justify-center border border-black bg-linear-to-b'
const grey = 'from-[#505050] to-[#3c3c3c]'
const tfield = 'h-[28px] border border-[#1a1a1a] bg-[#131313] pl-[4px] text-[11px] text-[#e0e0e0] outline-none'

function Timeline() {
  return (
    <footer className="flex h-[60px] shrink-0 overflow-hidden border-t-2 border-[#4b4b4b] bg-[#2e2e2e]">
      <div className="w-[10px] shrink-0 border-r border-black bg-[#434343]" />
      <div className="flex min-w-0 flex-1 flex-col pl-[5px]">
        <div className="flex h-[42px] shrink-0">
          <div className="flex pt-[6px]">
            {playButtons.map(n => (
              <button key={n} aria-label={n} className={clsx(tbtn, 'w-[27px]', n === 'stop' ? 'from-[#56708f] to-[#7490ad]' : grey)}><Ico n={n} s="size-[20px]" /></button>
            ))}
            <input aria-label="Current frame" defaultValue="64" className={clsx(tfield, 'ml-[3px] mr-[3px] w-[46px]')} />
            <button aria-label="Previous key" className={clsx(tbtn, grey, 'w-[14px]')}><Ico n="stepback" s="size-[10px]" /></button>
            <button aria-label="Next key" className={clsx(tbtn, grey, 'w-[14px]')}><Ico n="stepfwd" s="size-[10px]" /></button>
          </div>
          <div className="relative ml-[5px] mr-[3px] min-w-0 flex-1">
            <div className="-ml-[8px] mr-[8px] flex">
              {Array.from({ length: 63 }, (_, i) => (
                <span key={i} className={clsx('min-w-0 flex-1 text-center text-[9px] leading-[13px]', (i + 1) % 12 === 0 ? 'text-[#c4c4c4]' : 'text-[#7c7c7c]')}>{i + 1}</span>
              ))}
              <span className="flex-1" />
            </div>
            <div className="relative flex h-[18px] items-center">
              <div className="absolute inset-x-0 h-px bg-[#b4b4b4]" />
              {Array.from({ length: 64 }, (_, i) => (
                <i key={i} className={clsx('block min-w-0 flex-1 border-l', (i + 1) % 12 === 0 ? 'h-[16px] border-[#c4c4c4]' : 'h-[9px] border-[#8a8a8a]')} />
              ))}
            </div>
            <div className="absolute right-[10px] top-[2px] flex flex-col items-center">
              <span className="rounded-[2px] border border-[#e8e8e8] bg-[#111] px-[4px] text-[11px] leading-[16px] text-white">64</span>
              <Tri c="#e8e8e8" />
            </div>
          </div>
        </div>
        <div className="flex">
          {optButtons.map(n => <button key={n} aria-label={n} className={clsx(tbtn, grey, 'w-[27px]')}><Ico n={n} s="size-[20px]" /></button>)}
          <span className="w-[4px]" />
          <button aria-label="Previous range" disabled className={clsx(tbtn, grey, 'w-[23px] opacity-50')}><Ico n="stepback" s="size-[12px]" /></button>
          <button aria-label="Next range" disabled className={clsx(tbtn, grey, 'w-[23px] opacity-50')}><Ico n="stepfwd" s="size-[12px]" /></button>
          <span className="w-[9px]" />
          <input aria-label="Global start" defaultValue="1" className={clsx(tfield, 'w-[44px]')} />
          <input aria-label="Range start" defaultValue="1" className={clsx(tfield, 'w-[43px]')} />
          <div className="relative mt-[6px] h-[10px] min-w-0 flex-1">
            <div className="absolute inset-x-0 top-[4px] h-[3px] bg-[#111]" />
            <div className="absolute left-0 top-[4px] h-[3px] w-[53%] bg-[#777]" />
            <svg viewBox="0 0 8 12" className="absolute left-0 top-0 h-[10px] w-[6px]"><path d="M0 0l8 6-8 6z" fill="#aaa" /></svg>
            <svg viewBox="0 0 8 12" className="absolute left-[52%] top-0 h-[10px] w-[6px]"><path d="M8 0L0 6l8 6z" fill="#aaa" /></svg>
          </div>
          <input aria-label="Range end" defaultValue="64" className={clsx(tfield, 'ml-[4px] w-[45px]')} />
          <input aria-label="Global end" defaultValue="120" className={clsx(tfield, 'mr-[9px] w-[43px]')} />
        </div>
      </div>
      <div className="flex w-[248px] shrink-0 pt-[7px]">
        <button aria-label="Set key" className="ml-[2px] flex size-[38px] items-center justify-center rounded-full border border-[#3f3f3f] bg-[#262626]"><Ico n="key" s="size-[22px]" /></button>
        <button aria-label="Key options" className="flex h-[38px] w-[13px] items-center justify-center border border-[#222] bg-[#3a3a3a]"><Tri c="#8a8a8a" s="size-[8px]" /></button>
        <div className="ml-[7px] flex flex-col gap-[6px]">
          <div className="flex items-center gap-[6px]">
            <button aria-label="Channel list" className="flex size-[22px] items-center justify-center border border-black bg-[#444]"><Ico n="keyscope" s="size-[16px]" /></button>
            <button className="flex h-[22px] w-[153px] items-center justify-between border border-[#222] border-t-[#5c5c5c] bg-linear-to-b from-[#4b4b4b] to-[#3b3b3b] pl-[16px] pr-[4px] text-[11px]">
              0 keys, 0/0 channels
              <svg viewBox="0 0 8 8" className="size-[7px]"><path d="M4 1l4 6H0z" fill="#8f8f8f" /></svg>
            </button>
          </div>
          <div className="flex items-center gap-[6px]">
            <button aria-label="Animation editor" className="flex size-[22px] items-center justify-center border border-black bg-[#444]"><Ico n="curvebox" s="size-[16px]" /></button>
            <span className="flex h-[22px] w-[153px] border border-[#222] border-t-[#5c5c5c] bg-linear-to-b from-[#4b4b4b] to-[#3b3b3b]">
              <select aria-label="Key mode" className="min-w-0 flex-1 appearance-none bg-transparent pl-[12px] text-[11px] outline-none"><option>Key All Channels</option></select>
              <span className="flex w-[18px] items-center justify-center"><UpDown /></span>
            </span>
          </div>
        </div>
      </div>
    </footer>
  )
}

// the neighbouring window that shows past the right edge
function Neighbour() {
  return (
    <aside className="flex w-[15px] shrink-0 flex-col overflow-hidden bg-[#151515]">
      <div className="flex h-[46px] shrink-0 items-center pl-[6px]"><span className="mb-[14px] size-[34px] shrink-0 rounded-full border border-[#aaa] bg-[#1c1c1c]" /></div>
      <div className="h-[40px] bg-[#262626]" />
      <div className="ml-[4px] mt-[4px] h-[25px] bg-[#242424] pl-[5px] pt-[6px]"><div className="h-[5px] bg-[#777]" /><div className="mt-px h-[5px] bg-[#777]" /></div>
      <div className="ml-[4px] h-[215px] bg-linear-to-b from-[#8fa6c8] via-[#8694ab] via-45% to-[#2b3038] to-90%" />
      <div className="ml-[4px] h-[41px] bg-[#222c20]" />
      <div className="ml-[4px] h-[167px] bg-linear-to-b from-[#a0a0a0] to-[#858585]" />
      <div className="ml-[4px] mt-[6px] h-[28px] rounded-tl-[6px] bg-[#262626] pl-[5px] pt-[4px]"><div className="h-[8px] border-y-2 border-[#bbb]" /></div>
      <div className="ml-[5px] h-[20px] rounded-l-[4px] bg-[#0a6fe0]" />
      <div className="ml-[5px] mt-[5px] size-[20px] shrink-0 rounded-full border-2 border-[#999] bg-[#111]" />
      <div className="mt-[4px] flex-1 bg-[#1b1b1b]" />
    </aside>
  )
}

function Defs() {
  return (
    <svg className="absolute size-0" aria-hidden="true">
      <defs>
        <radialGradient id="ball" cx=".4" cy=".3" r=".75"><stop offset="0" stopColor="#dde4e8" /><stop offset="1" stopColor="#59656d" /></radialGradient>
        <radialGradient id="blue" cx=".35" cy=".3" r=".8"><stop offset="0" stopColor="#d6e6fb" /><stop offset="1" stopColor="#2f5ea8" /></radialGradient>
        <linearGradient id="steel"><stop offset="0" stopColor="#7e8f99" /><stop offset=".4" stopColor="#cfdbe1" /><stop offset="1" stopColor="#5c6a73" /></linearGradient>
        <linearGradient id="gi"><stop offset="0" stopColor="#b5d6ae" /><stop offset=".5" stopColor="#f1f0ea" /><stop offset="1" stopColor="#dcb4ac" /></linearGradient>
      </defs>
    </svg>
  )
}

export default function App() {
  return (
    <div className="flex h-screen w-full overflow-hidden bg-[#151515] font-['Noto_Sans_CJK_SC',sans-serif] text-[#c4c4c4]">
      <Defs />
      <main className="flex min-w-0 flex-1 flex-col bg-[#2e2e2e]">
        <header className="flex h-[11px] shrink-0 items-end justify-between overflow-hidden bg-white text-black">
          <div className="flex items-center gap-[6px] pl-px">
            <Ico n="appicon" s="size-[17px]" />
            <h1 className="whitespace-nowrap font-['Noto_Sans'] text-[12px] leading-[20px]">E:/houdiniStudy/Explossion02/fixP.hip - Houdini FX 20.5.370 - Py3.11</h1>
          </div>
          <div className="flex items-center gap-[36px] pb-[7px] pr-[20px]">
            <button aria-label="Restore"><svg viewBox="0 0 10 10" className="size-[10px]"><path d="M.5 2.500h7v7h-7zM2.500 2V.5h7v7H8" fill="none" stroke="#111" /></svg></button>
            <button aria-label="Close"><svg viewBox="0 0 10 10" className="size-[11px]"><path d="M0 0l10 10M10 0L0 10" stroke="#111" /></svg></button>
          </div>
        </header>
        <MenuBar />
        <Shelves />
        <div className="flex min-h-0 flex-1">
          <div className="flex w-[7px] shrink-0 flex-col items-center justify-center border-l border-black bg-[#434343]"><DotGrip cols={3} rows={10} /></div>
          <ScenePane />
          <div className="flex w-[5px] shrink-0 flex-col items-center justify-center bg-[#434343]"><DotGrip cols={2} rows={10} /></div>
          <RightPane />
        </div>
        <Timeline />
      </main>
      <Neighbour />
    </div>
  )
}
